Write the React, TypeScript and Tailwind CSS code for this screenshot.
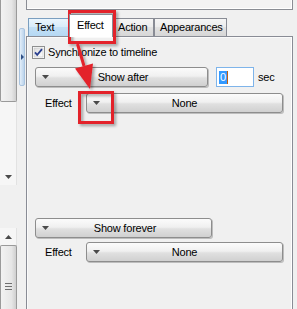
import React from "react";

const btn =
  "flex items-center h-[20px] rounded-[3px] border border-[#8d8d8d] bg-[linear-gradient(to_bottom,#fbfbfb_0%,#f0f0f0_45%,#e0e0e0_55%,#d0d0d0_100%)] shadow-[1px_1px_0_#bdbdbd]";

function DownTri() {
  return (
    <svg width="7" height="4" viewBox="0 0 7 4">
      <path d="M0 0H7L3.5 4Z" fill="#4a4a4a" />
    </svg>
  );
}

function DropButton({ label, wide, shift }: { label: string; wide: string; shift?: boolean }) {
  return (
    <div className={`${btn} ${wide}`}>
      <span className="flex w-[20px] items-center pl-[6px]">
        <DownTri />
      </span>
      <span className={shift ? "flex-1 pr-[17px] text-center" : "flex-1 pr-[20px] text-center"}>{label}</span>
    </div>
  );
}

function EffectRow({ mt }: { mt: string }) {
  return (
    <div className={`flex items-center ${mt}`}>
      <span className="w-[54px] pl-[13px]">Effect</span>
      <DropButton label="None" wide="w-[197px]" />
    </div>
  );
}

function Checkbox() {
  return (
    <svg width="13" height="13" viewBox="0 0 13 13">
      <defs>
        <linearGradient id="cb" x1="0" y1="0" x2="1" y2="1">
          <stop offset="0" stopColor="#dcdcdc" />
          <stop offset="1" stopColor="#ffffff" />
        </linearGradient>
      </defs>
      <rect x="0.5" y="0.5" width="12" height="12" fill="#fff" stroke="#8e8f8f" />
      <rect x="2" y="2" width="9" height="9" fill="url(#cb)" stroke="#c4c4c4" strokeWidth="0.6" />
      <path d="M3 6.3L5.2 8.8L10 3.2" fill="none" stroke="#2a3f8f" strokeWidth="1.8" />
    </svg>
  );
}

export default function App() {
  return (
    <div className="relative flex h-[309px] w-[297px] overflow-hidden bg-[#f0f0f0] font-['Liberation_Sans',Arial,sans-serif] text-[11px] leading-[13px] tracking-[-0.2px] text-black">
      {/* left scrollbars */}
      <div className="flex w-[17px] flex-col">
        <div className="h-[102px] rounded-b-[2px] border border-t-0 border-[#9a9a9a] bg-[linear-gradient(to_right,#f2f2f2,#e6e6e6_70%,#cfcfcf)]" />
        <div className="flex h-[83px] flex-col items-center justify-end border-r border-[#e2e2e2] bg-[#f6f6f6] pb-[6px]">
          <DownTri />
        </div>
        <div className="h-[43px]" />
        <div className="flex h-[17px] items-center justify-center border-r border-[#e2e2e2] bg-[#f6f6f6]">
          <svg width="7" height="4" viewBox="0 0 7 4">
            <path d="M0 4H7L3.5 0Z" fill="#4a4a4a" />
          </svg>
        </div>
        <div className="flex flex-1 flex-col items-center justify-center gap-[2px] rounded-t-[2px] border border-b-0 border-[#9a9a9a] bg-[linear-gradient(to_right,#f2f2f2,#e6e6e6_70%,#cfcfcf)] pt-[18px]">
          <div className="h-[1px] w-[7px] bg-[#6f6f6f]" />
          <div className="h-[1px] w-[7px] bg-[#6f6f6f]" />
          <div className="h-[1px] w-[7px] bg-[#6f6f6f]" />
        </div>
      </div>

      {/* splitter */}
      <div className="w-[9px] pl-[2px] pt-[28px]">
        <div className="flex h-[58px] w-[6px] items-center rounded-[2px] border border-[#a9c4e0] bg-[linear-gradient(to_right,#e3eef9,#bcd4ec)] pl-[1px]">
          <svg width="3" height="6" viewBox="0 0 3 6">
            <path d="M0 0L3 3L0 6Z" fill="#2f4f86" />
          </svg>
        </div>
      </div>

      {/* main */}
      <div className="flex w-[267px] flex-col">
        <div className="h-[10px] border border-t-0 border-[#8a8d94] bg-[#f3f3f3] shadow-[inset_-1px_-1px_0_#ffffff]" />

        {/* tabs */}
        <div className="mt-[4px] flex h-[22px] items-end pl-[2px]">
          <div className="flex h-[18px] w-[41px] items-center border border-b-0 border-[#7a9ebf] bg-[linear-gradient(to_bottom,#eaf5fd,#d6ebfa_50%,#c3e0f6_50%,#b5d8f3)] pl-[6px]">
            Text
          </div>
          <div className="relative z-10 -mb-[1px] flex h-[23px] w-[44px] items-center border border-b-0 border-[#898c95] bg-white pb-[2px] pl-[7px]">
            Effect
          </div>
          <div className="flex h-[18px] w-[41px] items-center border border-b-0 border-[#898c95] bg-[linear-gradient(to_bottom,#f5f5f5,#ececec_50%,#e2e2e2_50%,#d6d6d6)] pl-[4px]">
            Action
          </div>
          <div className="flex h-[18px] w-[73px] items-center border border-b-0 border-[#898c95] bg-[linear-gradient(to_bottom,#f5f5f5,#ececec_50%,#e2e2e2_50%,#d6d6d6)] pl-[5px]">
            Appearances
          </div>
        </div>

        {/* panel */}
        <div className="flex flex-1 flex-col border border-b-0 border-[#898c95] bg-[#f0f0f0] pl-[5px] shadow-[inset_-1px_0_0_#ffffff,inset_1px_1px_0_#fafafa]">
          <div className="mt-[9px] flex h-[13px] items-center gap-[3px]">
            <Checkbox />
            <span>Synchronize to timeline</span>
          </div>

          <div className="mt-[8px] flex items-center pl-[3px]">
            <DropButton label="Show after" wide="w-[173px]" shift />
            <div className="ml-[8px] flex h-[20px] w-[38px] items-center border border-[#7eb4ea] bg-white pl-[2px]">
              <span className="bg-[#3399ff] px-[1px] leading-[13px] text-white">0</span>
              <span className="h-[13px] w-[1px] bg-[#c06010]" />
            </div>
            <span className="ml-[4px]">sec</span>
          </div>

          <EffectRow mt="mt-[6px]" />

          <div className="mt-[105px] flex items-center pl-[3px]">
            <DropButton label="Show forever" wide="w-[177px]" shift />
          </div>

          <EffectRow mt="mt-[4px]" />
        </div>
      </div>

      {/* annotations */}
      <svg className="pointer-events-none absolute left-0 top-0" width="297" height="309" viewBox="0 0 297 309">
        <defs>
          <filter id="sh" x="-20%" y="-20%" width="140%" height="140%">
            <feDropShadow dx="2" dy="2" stdDeviation="1.5" floodColor="#000" floodOpacity="0.35" />
          </filter>
        </defs>
        <g filter="url(#sh)" fill="none" stroke="#e3202a" strokeWidth="3">
          <rect x="69.5" y="11.5" width="45" height="31" />
          <rect x="79.5" y="92.5" width="33" height="30" />
          <line x1="77.5" y1="44" x2="84" y2="66" />
          <path d="M90 89L75 68.5L93 63.5Z" fill="#e3202a" stroke="none" />
        </g>
      </svg>
    </div>
  );
}
